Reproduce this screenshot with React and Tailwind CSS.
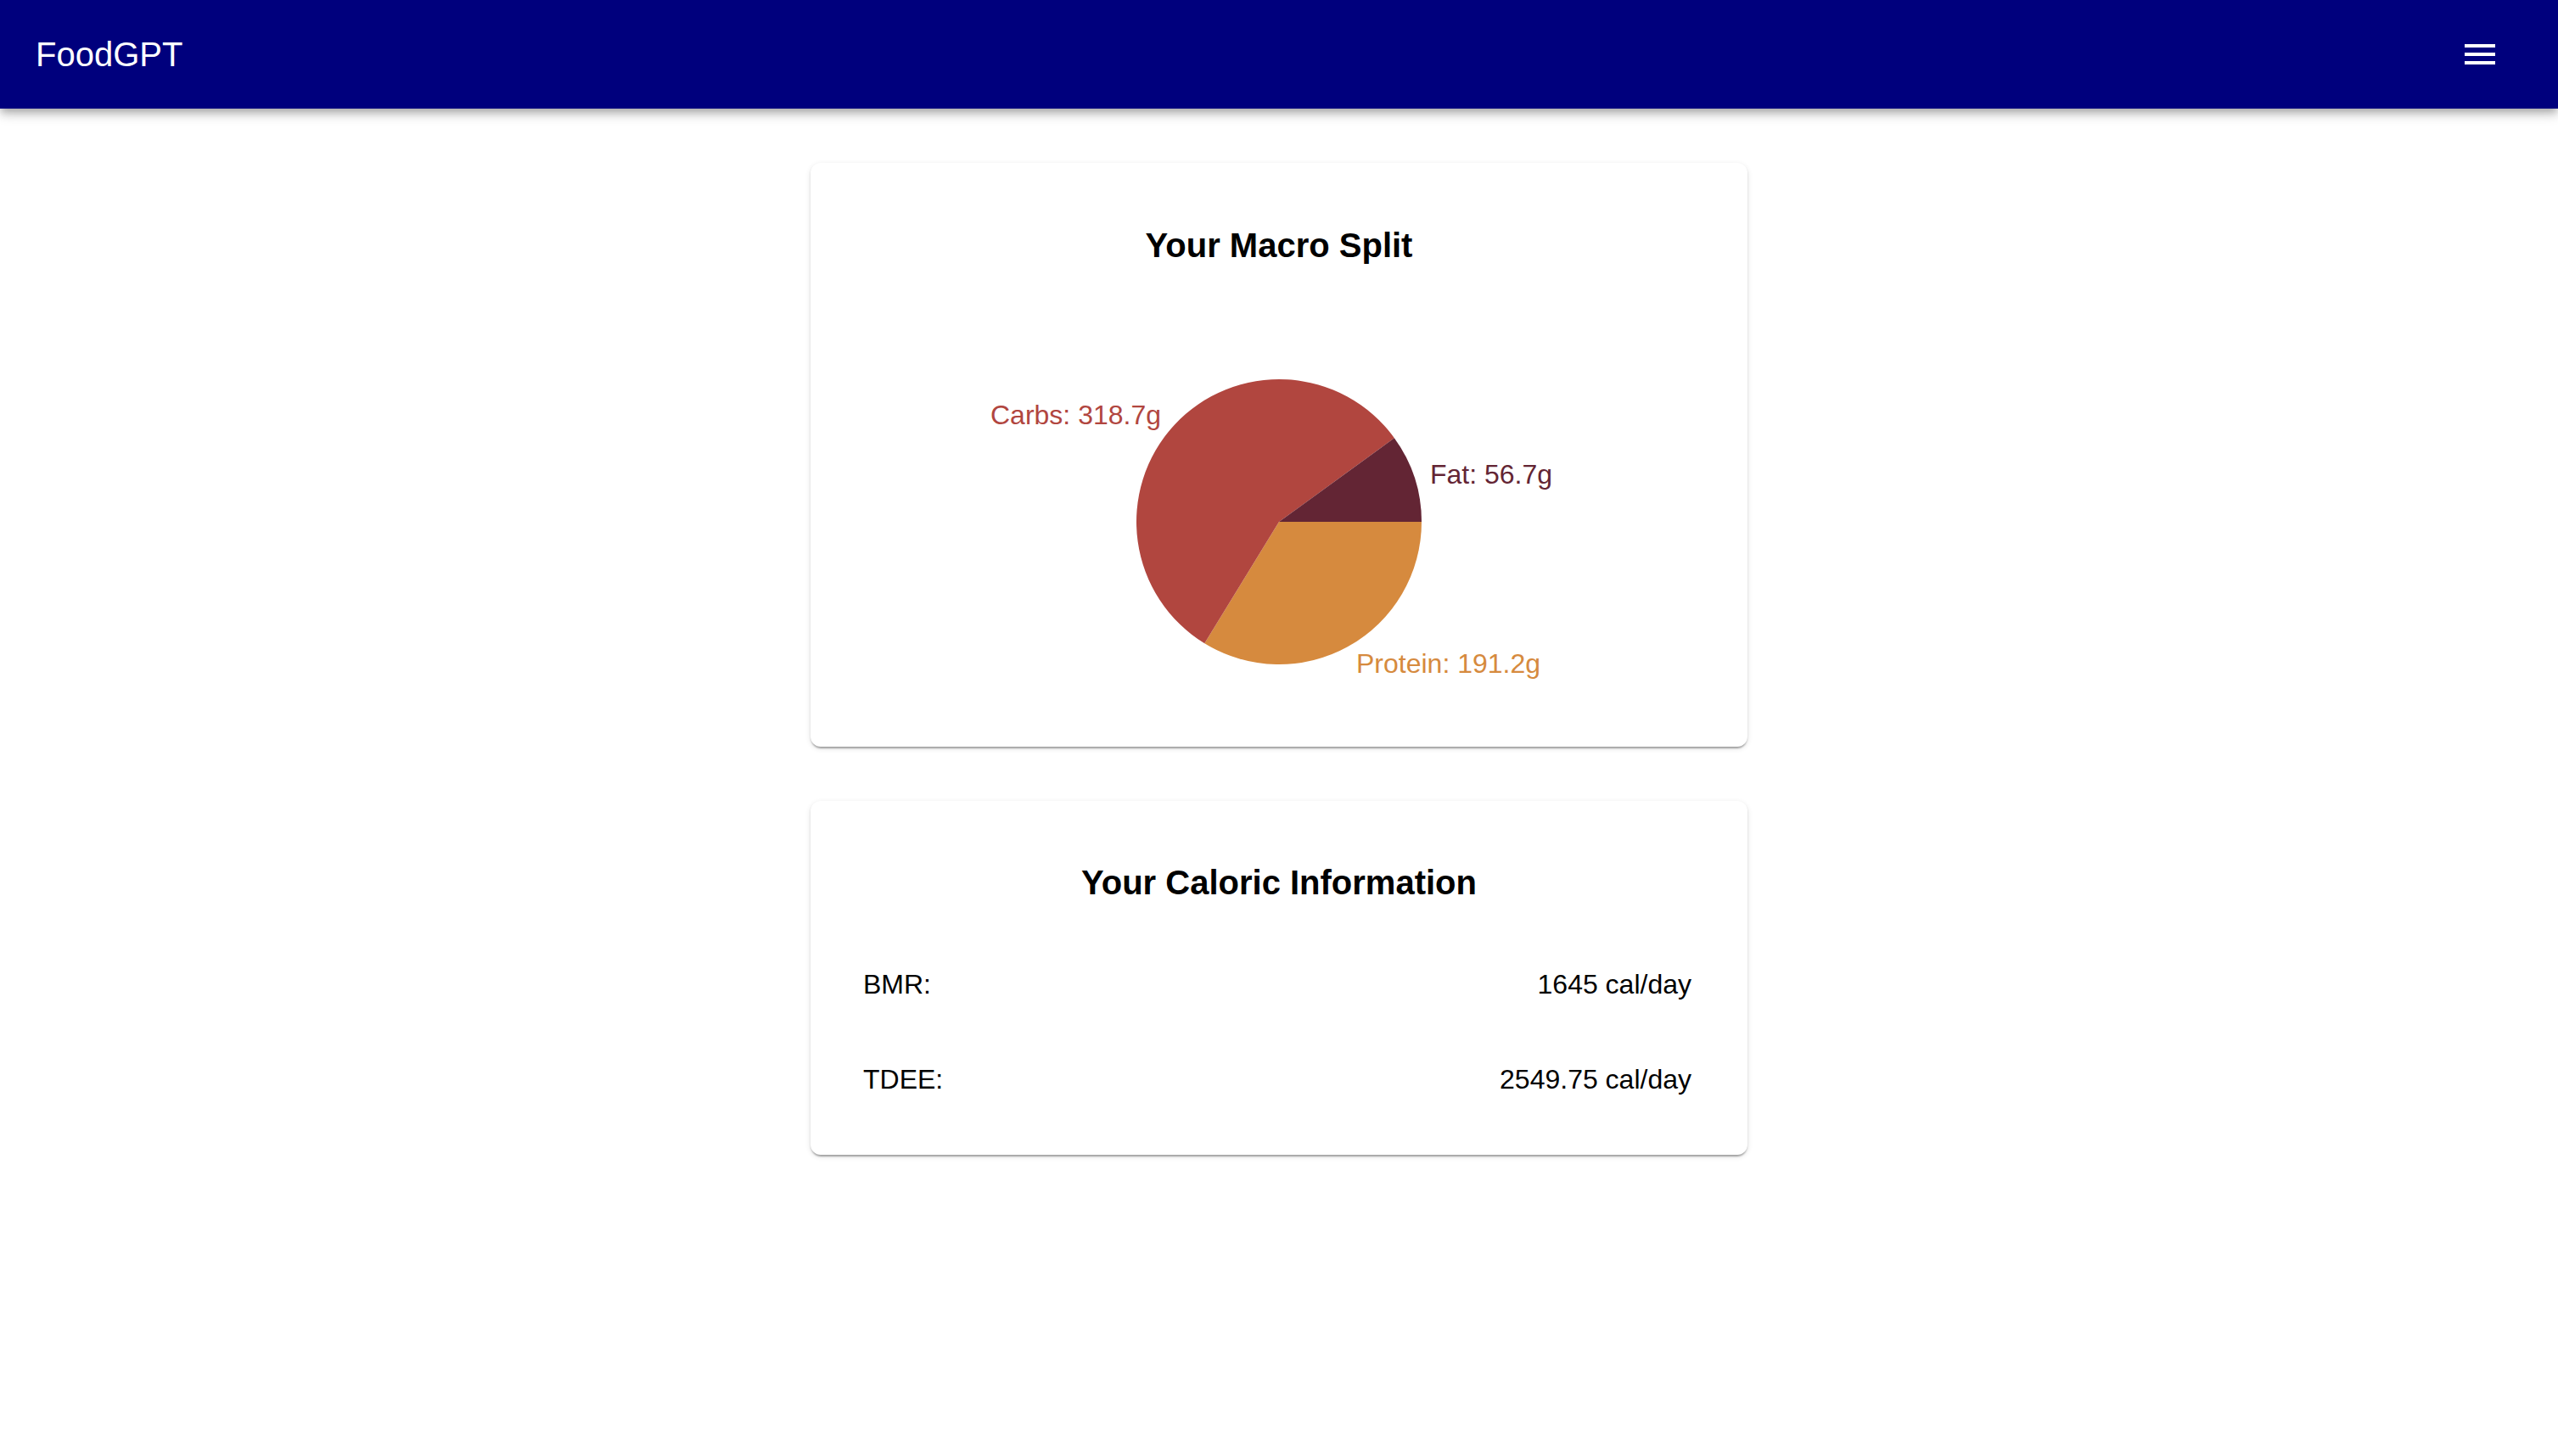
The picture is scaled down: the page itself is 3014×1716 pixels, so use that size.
import React from "react";

const CX = 552;
const CY = 298;
const R = 168;

function pt(deg) {
  const a = (deg * Math.PI) / 180;
  return [CX + R * Math.cos(a), CY + R * Math.sin(a)];
}

function slice(a0, a1) {
  const [x0, y0] = pt(a0);
  const [x1, y1] = pt(a1);
  const large = a1 - a0 > 180 ? 1 : 0;
  return `M${CX},${CY} L${x0.toFixed(2)},${y0.toFixed(2)} A${R},${R} 0 ${large} 1 ${x1.toFixed(2)},${y1.toFixed(2)} Z`;
}

const carbs = 318.7;
const fat = 56.7;
const protein = 191.2;
const total = carbs + fat + protein;
const pDeg = (protein / total) * 360;
const fDeg = (fat / total) * 360;

function PieChart() {
  return (
    <svg width="1104" height="559" viewBox="0 0 1104 559" className="-mt-[4px] block">
      <path d={slice(0, pDeg)} fill="#D68A3E" />
      <path d={slice(pDeg, 360 - fDeg)} fill="#B1463F" />
      <path d={slice(360 - fDeg, 360)} fill="#632534" />
      <text
        x="413"
        y="183"
        textAnchor="end"
        fill="#B1463F"
        fontSize="32"
        fontFamily="'Liberation Sans', Arial, sans-serif"
      >
        Carbs: 318.7g
      </text>
      <text
        x="730"
        y="253"
        textAnchor="start"
        fill="#632534"
        fontSize="32"
        fontFamily="'Liberation Sans', Arial, sans-serif"
      >
        Fat: 56.7g
      </text>
      <text
        x="643"
        y="476"
        textAnchor="start"
        fill="#D68A3E"
        fontSize="32"
        fontFamily="'Liberation Sans', Arial, sans-serif"
      >
        Protein: 191.2g
      </text>
    </svg>
  );
}

const cardShadow =
  "shadow-[0_4px_2px_-2px_rgba(0,0,0,0.2),0_2px_2px_0_rgba(0,0,0,0.14),0_2px_6px_0_rgba(0,0,0,0.12)]";

export default function App() {
  return (
    <div className="min-h-screen bg-white font-['Liberation_Sans',Arial,sans-serif] text-black">
      <header className="relative z-10 flex h-[128px] items-center justify-between bg-[#00007D] pl-[42px] pr-[68px] shadow-[0_4px_8px_-2px_rgba(0,0,0,0.2),0_8px_10px_0_rgba(0,0,0,0.14),0_2px_20px_0_rgba(0,0,0,0.12)]">
        <div className="text-[40px] leading-[64px] text-white">FoodGPT</div>
        <svg width="48" height="48" viewBox="0 0 24 24" fill="white">
          <path d="M3 18h18v-2H3zm0-5h18v-2H3zm0-7v2h18V6z" />
        </svg>
      </header>

      <main className="flex flex-col items-center gap-[64px] pt-[64px] pb-[64px]">
        <section
          className={`flex h-[688px] w-[1104px] flex-col overflow-hidden rounded-[12px] bg-white pt-[65px] ${cardShadow}`}
        >
          <h2 className="text-center text-[40px] font-bold leading-[64px]">
            Your Macro Split
          </h2>
          <PieChart />
        </section>

        <section
          className={`flex h-[417px] w-[1104px] flex-col rounded-[12px] bg-white pt-[64px] ${cardShadow}`}
        >
          <h2 className="text-center text-[40px] font-bold leading-[64px]">
            Your Caloric Information
          </h2>
          <ul className="mt-[32px] flex flex-col pl-[62px] pr-[66px]">
            <li className="flex h-[112px] items-center justify-between text-[32px] leading-[48px]">
              <span>BMR:</span>
              <span>1645 cal/day</span>
            </li>
            <li className="flex h-[112px] items-center justify-between text-[32px] leading-[48px]">
              <span>TDEE:</span>
              <span>2549.75 cal/day</span>
            </li>
          </ul>
        </section>
      </main>
    </div>
  );
}
